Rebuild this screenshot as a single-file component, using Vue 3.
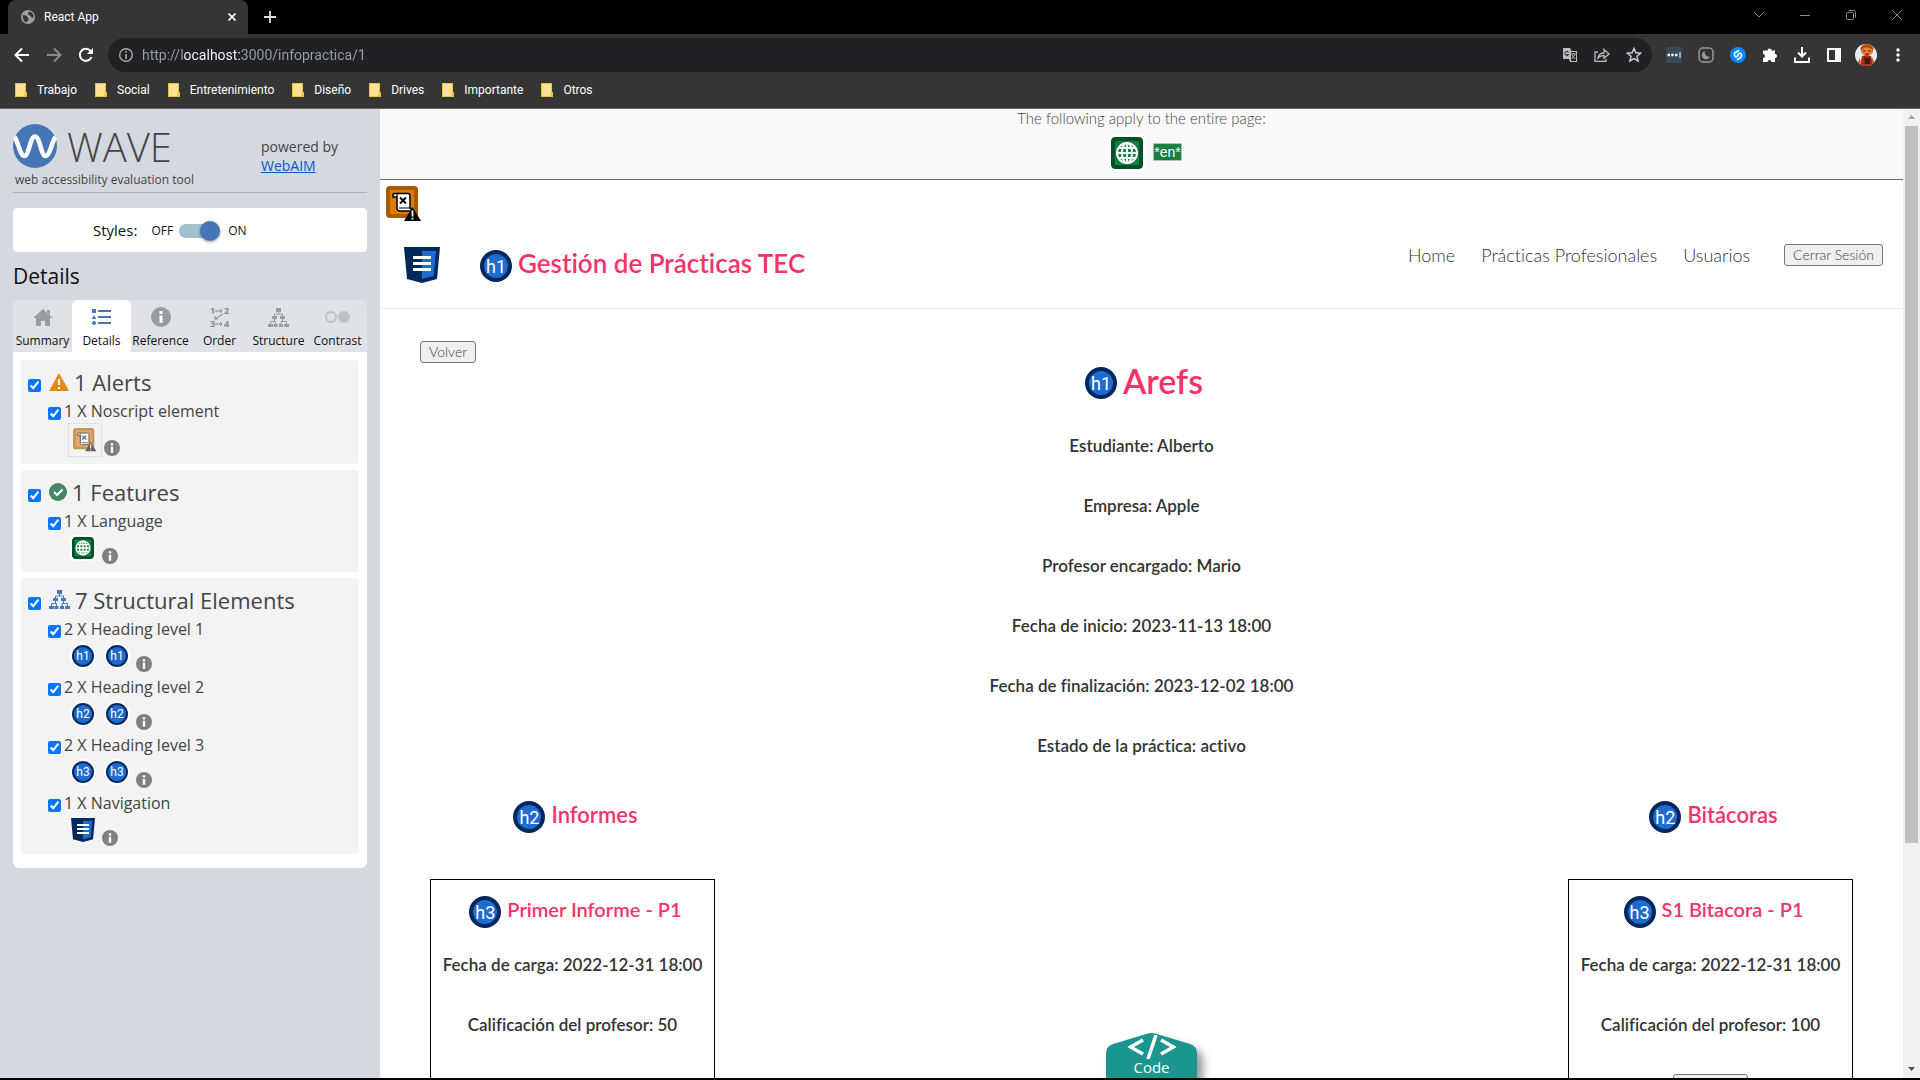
<script setup>
import { ref } from 'vue'

const url = ref('http://localhost:3000/infopractica/1')
const stylesOn = ref(true)
const bookmarks = ['Trabajo', 'Social', 'Entretenimiento', 'Diseño', 'Drives', 'Importante', 'Otros']
const tabs = ['Summary', 'Details', 'Reference', 'Order', 'Structure', 'Contrast']
const groups = [
  { icon: 'alert', title: '1 Alerts', items: [{ label: '1 X Noscript element', icons: ['noscript'] }] },
  { icon: 'feature', title: '1 Features', items: [{ label: '1 X Language', icons: ['lang'] }] },
  {
    icon: 'structure',
    title: '7 Structural Elements',
    items: [
      { label: '2 X Heading level 1', icons: ['h1', 'h1'] },
      { label: '2 X Heading level 2', icons: ['h2', 'h2'] },
      { label: '2 X Heading level 3', icons: ['h3', 'h3'] },
      { label: '1 X Navigation', icons: ['nav'] },
    ],
  },
]
const facts = [
  'Estudiante: Alberto',
  'Empresa: Apple',
  'Profesor encargado: Mario',
  'Fecha de inicio: 2023-11-13 18:00',
  'Fecha de finalización: 2023-12-02 18:00',
  'Estado de la práctica: activo',
]
const columns = [
  { title: 'Informes', card: 'Primer Informe - P1', date: 'Fecha de carga: 2022-12-31 18:00', grade: 'Calificación del profesor: 50', action: false },
  { title: 'Bitácoras', card: 'S1 Bitacora - P1', date: 'Fecha de carga: 2022-12-31 18:00', grade: 'Calificación del profesor: 100', action: true },
]
</script>

<template>
  <div class="browser">
    <svg class="defs" width="0" height="0" aria-hidden="true">
      <symbol id="i-globe" viewBox="0 0 32 32">
        <rect width="32" height="32" rx="4" fill="#00502a" />
        <rect x="4" y="4" width="24" height="24" fill="#15803f" />
        <g fill="none" stroke="#fff" stroke-width="2">
          <circle cx="16" cy="16" r="10" /><ellipse cx="16" cy="16" rx="5" ry="10" />
          <path d="M16 6v20M6 16h20M7.500 11h17M7.500 21h17" />
        </g>
      </symbol>
      <symbol id="i-noscript" viewBox="0 0 36 36">
        <rect width="32" height="32" rx="4" fill="#a85a00" />
        <rect x="4" y="4" width="24" height="24" fill="#dd7a00" />
        <path d="M9 7.500h13c1.500 0 2 1 2 2V22l3 3H14c-2 0-3-1-3-3V11H7V9c0-1 1-1.500 2-1.500z" fill="#fff" stroke="#000" stroke-width="1.500" />
        <path d="M11 11V8M13 22h11" stroke="#000" stroke-width="1.200" fill="none" />
        <path d="M14 11.500l6 6M20 11.500l-6 6" stroke="#000" stroke-width="1.800" />
        <path d="M26.500 21L35 35H18z" fill="#000" />
        <path d="M26.500 24.500v6M26.500 31.700v1.800" stroke="#fff" stroke-width="1.800" />
      </symbol>
      <symbol id="i-nav" viewBox="0 0 36 36">
        <path d="M0 0h36l-3 32-15 4-15-4z" fill="#00285c" />
        <path d="M18 4h14l-2.300 25L18 32z" fill="#1f6bd0" />
        <path d="M9 9h18v3H9zM9 15h18v3H9zM9 21h18v3H9z" fill="#fff" />
      </symbol>
      <symbol id="i-info" viewBox="0 0 20 20">
        <circle cx="10" cy="10" r="10" fill="currentColor" />
        <path d="M8.500 4h3v3h-3zM8.500 8.500h3V16h-3z" class="info-mark" />
      </symbol>
      <symbol id="i-structure" viewBox="0 0 21 19">
        <path d="M8 0h5v4H8zM4 8h5v3H4zM12 8h5v3h-5zM0 16h5v3H0zM5.500 16h4v3h-4zM11 16h4v3h-4zM16 16h5v3h-5z" fill="currentColor" />
        <path d="M10.500 3v3M6.500 8V6h8v2M6.500 11v2.500M2.500 16v-2.500h5V16M14.500 11v2.500M13 16v-2.500h5.500V16" fill="none" stroke="currentColor" />
      </symbol>
    </svg>

    <header class="chrome">
      <div class="tabstrip">
        <div class="tab">
          <svg width="14" height="14" viewBox="0 0 14 14"><circle cx="7" cy="7" r="7" fill="#9aa0a6" /><path d="M2 5c1.500.500 3.500 0 4 1.500S8 8 7.500 9.500 6 11 5.500 12.500C3 11.500 1.500 9 2 5zM8 1.500c0 1.500-1.500 1.500-1 2.800S10 5 10 6.500s1.500 1 2.500 1C13 4.500 11 2 8 1.500z" fill="#35363a" /></svg>
          <span class="tab-title">React App</span>
          <button class="plain" aria-label="Close tab"><svg width="8" height="8" viewBox="0 0 8 8"><path d="M0.500 0.500l7 7M7.500 0.500l-7 7" stroke="#fff" stroke-width="1.600" /></svg></button>
        </div>
        <button class="plain new-tab" aria-label="New tab"><svg width="12" height="12" viewBox="0 0 12 12"><path d="M6 0v12M0 6h12" stroke="#ddd" stroke-width="1.800" /></svg></button>
        <div class="window-buttons">
          <button class="plain" aria-label="Search tabs"><svg width="10" height="10" viewBox="0 0 10 10"><path d="M0 2l5 5 5-5" fill="none" stroke="#888" /></svg></button>
          <button class="plain" aria-label="Minimize"><svg width="10" height="10" viewBox="0 0 10 10"><path d="M0 5.500h10" stroke="#888" /></svg></button>
          <button class="plain" aria-label="Restore"><svg width="10" height="10" viewBox="0 0 10 10"><rect x=".5" y="2.500" width="7" height="7" rx="1" fill="none" stroke="#888" /><path d="M2.500.500h5a2 2 0 0 1 2 2v5" fill="none" stroke="#888" /></svg></button>
          <button class="plain" aria-label="Close window"><svg width="10" height="10" viewBox="0 0 10 10"><path d="M0 0l10 10M10 0L0 10" stroke="#888" /></svg></button>
        </div>
      </div>

      <div class="toolbar">
        <div class="nav-buttons">
          <button class="plain" aria-label="Back"><svg width="16" height="16" viewBox="0 0 16 16"><path d="M15 8H2M8 1.500L1.500 8 8 14.500" fill="none" stroke="#fff" stroke-width="2" /></svg></button>
          <button class="plain" aria-label="Forward"><svg width="16" height="16" viewBox="0 0 16 16"><path d="M1 8h13M8 1.500L14.500 8 8 14.500" fill="none" stroke="#8a8a8a" stroke-width="2" /></svg></button>
          <button class="plain" aria-label="Reload"><svg width="16" height="16" viewBox="0 0 16 16"><path d="M13.500 10A6 6 0 1 1 12.500 4" fill="none" stroke="#fff" stroke-width="2" /><path d="M15 1v6H9z" fill="#fff" /></svg></button>
        </div>
        <div class="omnibox">
          <svg width="14" height="14" viewBox="0 0 14 14"><circle cx="7" cy="7" r="6.300" fill="none" stroke="#aaa" stroke-width="1.400" /><path d="M7 3v1.700M7 6v5" stroke="#aaa" stroke-width="1.600" /></svg>
          <input v-model="url" class="url" type="text" aria-label="Address" />
          <button class="plain" aria-label="Translate"><svg width="15" height="15" viewBox="0 0 15 15"><path d="M0 0h7l1.500 3H14v11H7L6 11H0z" fill="#bbb" /><path d="M8 4h5v9H8z" fill="#202124" /><path d="M8 6h5M10.500 5v1M12.300 6.500L8.500 11M9 7l3 4" stroke="#bbb" fill="none" /><path d="M5.500 4.200a2 2 0 1 0 .2 2.300H4" fill="none" stroke="#202124" /></svg></button>
          <button class="plain" aria-label="Share"><svg width="16" height="16" viewBox="0 0 16 16"><path d="M4 5H1v9.300h11V12M4 11c.5-3.500 2.500-5 6-5V2.500L15 7l-5 4.300V8.500C7 8.500 5.300 9.500 4 11z" fill="none" stroke="#bbb" stroke-width="1.300" /></svg></button>
          <button class="plain" aria-label="Bookmark"><svg width="16" height="16" viewBox="0 0 16 16"><path d="M8 1.500l1.900 4.300 4.700.400-3.600 3.100 1.100 4.600L8 11.500l-4.100 2.400L5 9.300 1.400 6.200l4.700-.400z" fill="none" stroke="#ccc" stroke-width="1.500" /></svg></button>
        </div>
        <div class="extensions">
          <button class="plain" aria-label="Passwords"><svg width="16" height="16" viewBox="0 0 16 16"><rect width="16" height="16" rx="1" fill="#384a55" /><path d="M1.500 6.800h2.400v2.400H1.500zM5.300 6.800h2.400v2.400H5.300zM9.100 6.800h2.400v2.400H9.100zM13.500 5h1v6h-1z" fill="#fff" /></svg></button>
          <button class="plain" aria-label="Dark mode"><svg width="16" height="16" viewBox="0 0 16 16"><rect x="1" y="1" width="14" height="14" rx="4" fill="none" stroke="#999" stroke-width="1.500" /><path d="M7 4a4.200 4.200 0 1 0 5 5.500A4.200 4.200 0 0 1 7 4z" fill="#999" /></svg></button>
          <button class="plain" aria-label="Music finder"><svg width="16" height="16" viewBox="0 0 16 16"><circle cx="8" cy="8" r="8" fill="#08f" /><path d="M8.500 3.500L5.700 5.200C3.500 6.700 4.300 9 6 10L8.300 8.600M7.500 12.500l2.800-1.700C12.500 9.300 11.700 7 10 6L7.700 7.400" fill="none" stroke="#fff" stroke-width="1.600" stroke-linecap="round" /></svg></button>
          <button class="plain" aria-label="Extensions"><svg width="16" height="16" viewBox="0 0 16 16"><path d="M1 3.500h4.500a2 2 0 0 1 4 0H13V7a2 2 0 0 1 0 4v4H9.500a2 2 0 0 0-4 0H1v-4a2 2 0 0 0 0-4z" fill="#fff" /></svg></button>
          <button class="plain" aria-label="Downloads"><svg width="16" height="16" viewBox="0 0 16 16"><path d="M8 0v9M4 5.500l4 4 4-4M1 10.500V15h14v-4.500" fill="none" stroke="#fff" stroke-width="2" /></svg></button>
          <button class="plain" aria-label="Side panel"><svg width="14" height="14" viewBox="0 0 14 14"><rect x="1" y="1" width="12" height="12" fill="none" stroke="#fff" stroke-width="2" /><path d="M8 1h5v12H8z" fill="#fff" /></svg></button>
          <button class="plain" aria-label="Profile"><svg width="22" height="22" viewBox="0 0 22 22"><defs><clipPath id="pf"><circle cx="11" cy="11" r="11" /></clipPath></defs><g clip-path="url(#pf)"><path fill="#e8ecf2" d="M0 0h22v22H0z" /><ellipse cx="12" cy="5" rx="6.500" ry="5" fill="#b5480c" /><ellipse cx="12" cy="7.500" rx="6" ry="4" fill="#e88235" /><path d="M8 7h2.500M13 7h3M10 10h4" stroke="#5b1c08" stroke-width="1.200" /><path d="M7 12l5-1 4 1 3 10H5z" fill="#b52a14" /><path d="M9 12l3 3 3-3v8h-5z" fill="#4a1410" /><path d="M5 14l-3 6 4 1zM17 13l3 6-3 1z" fill="#d8602a" /></g></svg></button>
          <button class="plain" aria-label="Menu"><svg width="4" height="14" viewBox="0 0 4 14"><circle cx="2" cy="2" r="1.700" fill="#fff" /><circle cx="2" cy="7" r="1.700" fill="#fff" /><circle cx="2" cy="12" r="1.700" fill="#fff" /></svg></button>
        </div>
      </div>

      <nav class="bookmarks">
        <a v-for="b in bookmarks" :key="b" href="#">
          <svg width="12" height="14" viewBox="0 0 12 14"><path d="M0 0h11v9h1v5H0z" fill="#e9c243" /><path d="M1 1h9v8l-1 4H1z" fill="#ffe391" /></svg>{{ b }}
        </a>
      </nav>
    </header>

    <div class="body">
      <aside class="sidebar">
        <div class="brand">
          <div class="brand-main">
            <div class="brand-row">
              <svg width="44" height="44" viewBox="0 0 44 44"><circle cx="22" cy="22" r="22" fill="#4676b8" /><path d="M1.500 13C5 17 7 32 11.500 32S17 12.500 22 12.500 28 32 32.500 32 39 17 42.500 13" fill="none" stroke="#fff" stroke-width="4.600" /></svg>
              <span class="brand-name">WAVE</span>
            </div>
            <p>web accessibility evaluation tool</p>
          </div>
          <div class="powered">powered by<br /><a href="#">WebAIM</a></div>
        </div>

        <div class="styles-box">
          <span class="styles-label">Styles:</span>
          <label class="switch">OFF <input v-model="stylesOn" type="checkbox" role="switch" /> ON</label>
        </div>

        <h2>Details</h2>

        <div class="tabs">
          <button v-for="t in tabs" :key="t" :class="{ active: t === 'Details' }">
            <span class="tab-icon">
              <svg v-if="t === 'Summary'" width="20" height="17" viewBox="0 0 20 17"><path d="M10 0l10 9h-3v8h-5v-5H8v5H3V9H0zM14 1h3v5l-3-3z" fill="#9a9da0" /></svg>
              <svg v-else-if="t === 'Details'" width="19" height="16" viewBox="0 0 19 16"><path d="M0 0h4v4H0zM2 6l2.300 4H-.3zM6 1h13v2H6zM6 7h13v2H6zM6 13h13v2H6z" fill="#4676b8" /><circle cx="2" cy="14" r="2" fill="#4676b8" /></svg>
              <svg v-else-if="t === 'Reference'" class="info-tab" width="20" height="20"><use href="#i-info" /></svg>
              <svg v-else-if="t === 'Order'" width="28" height="30" viewBox="-4 -5 28 30"><g fill="#888b8e" class="order-digits"><text x="0" y="7">1</text><text x="14" y="7">2</text><text x="0" y="20">3</text><text x="14" y="20">4</text></g><path d="M5 4h7M10 2l2 2-2 2M5 17h7M10 15l2 2-2 2M13 7l-8 5M5 9v3h3" fill="none" stroke="#888b8e" /></svg>
              <svg v-else-if="t === 'Structure'" class="gray" width="21" height="19"><use href="#i-structure" /></svg>
              <svg v-else width="25" height="12" viewBox="0 0 25 12"><circle cx="6" cy="6" r="5" fill="none" stroke="#bfc1c4" stroke-width="2" /><circle cx="19" cy="6" r="6" fill="#bfc1c4" /></svg>
            </span>
            {{ t }}
          </button>
        </div>

        <div class="panel">
          <section v-for="g in groups" :key="g.title" class="group">
            <label class="group-title">
              <input type="checkbox" checked />
              <svg v-if="g.icon === 'alert'" width="20" height="18" viewBox="0 0 20 18"><path d="M10 0l10 18H0z" fill="#e68a17" /><path d="M10 6v6M10 14v2" stroke="#fff" stroke-width="2" /></svg>
              <svg v-else-if="g.icon === 'feature'" width="18" height="18" viewBox="0 0 18 18"><circle cx="9" cy="9" r="9" fill="#478564" /><path d="M5 9l3 3 5.500-5.500" fill="none" stroke="#fff" stroke-width="2" /></svg>
              <svg v-else class="blue" width="21" height="19"><use href="#i-structure" /></svg>
              <span>{{ g.title }}</span>
            </label>
            <div v-for="it in g.items" :key="it.label" class="item">
              <label><input type="checkbox" checked />{{ it.label }}</label>
              <div class="item-icons">
                <template v-for="(ic, i) in it.icons" :key="i">
                  <span v-if="ic === 'noscript'" class="dotted"><svg width="24" height="24"><use href="#i-noscript" /></svg></span>
                  <span v-else class="slot">
                    <svg v-if="ic === 'lang'" class="halo" width="22" height="22"><use href="#i-globe" /></svg>
                    <svg v-else-if="ic === 'nav'" width="24" height="24"><use href="#i-nav" /></svg>
                    <span v-else class="badge small">{{ ic }}</span>
                  </span>
                </template>
                <button class="plain info" aria-label="Information"><svg width="16" height="16"><use href="#i-info" /></svg></button>
              </div>
            </div>
          </section>
        </div>
      </aside>

      <main class="page">
        <div class="page-wide">
          <p>The following apply to the entire page:</p>
          <div class="page-wide-icons">
            <svg class="halo big" width="32" height="32"><use href="#i-globe" /></svg>
            <span class="lang">*en*</span>
          </div>
        </div>
        <svg class="noscript" width="36" height="36"><use href="#i-noscript" /></svg>

        <nav class="site-nav">
          <svg width="36" height="36"><use href="#i-nav" /></svg>
          <h1 class="site-title"><span class="badge">h1</span>Gestión de Prácticas TEC</h1>
          <div class="links">
            <a href="#">Home</a>
            <a href="#">Prácticas Profesionales</a>
            <a href="#">Usuarios</a>
            <button class="btn">Cerrar Sesión</button>
          </div>
        </nav>

        <div class="content">
          <button class="btn back">Volver</button>
          <h1 class="name"><span class="badge">h1</span>Arefs</h1>
          <p v-for="f in facts" :key="f" class="fact">{{ f }}</p>
          <div class="columns">
            <section v-for="c in columns" :key="c.title" class="column">
              <h2><span class="badge">h2</span>{{ c.title }}</h2>
              <article class="card">
                <h3><span class="badge">h3</span>{{ c.card }}</h3>
                <p class="fact">{{ c.date }}</p>
                <p class="fact">{{ c.grade }}</p>
                <button v-if="c.action" class="btn card-btn" aria-label="Ver"></button>
              </article>
            </section>
          </div>
        </div>

        <button class="code">
          <svg class="code-shape" width="108" height="60" viewBox="0 0 108 60"><path d="M6 60V22q0-8 7-10L47 1.700q4.500-1.400 9 0L90 12q7 2 7 10v38z" fill="#1a968f" /></svg>
          <svg class="code-mark" width="48" height="24" viewBox="0 0 48 24"><path d="M15 5L2.500 12 15 19M33 5l12.500 7L33 19M28 0l-8 24" fill="none" stroke="#fff" stroke-width="3.500" /></svg>
          <span>Code</span>
        </button>
      </main>

      <div class="scrollbar">
        <svg width="7" height="4" viewBox="0 0 7 4"><path d="M0 4l3.500-4L7 4z" fill="#a3a3a3" /></svg>
        <div class="thumb"></div>
        <svg class="down" width="7" height="4" viewBox="0 0 7 4"><path d="M0 0l3.500 4L7 0z" fill="#505050" /></svg>
      </div>
    </div>
  </div>
</template>

<style>
body { margin: 0; background: #000; }
</style>

<style scoped>
* { box-sizing: border-box; }
h1, h2, h3, p { margin: 0; }
svg { display: block; flex: none; }
.defs { position: absolute; }
.info-mark { fill: #fff; }
.plain { display: flex; align-items: center; justify-content: center; border: 0; padding: 0; background: none; }
.browser { height: 100vh; display: flex; flex-direction: column; border-bottom: 2px solid #000; overflow: hidden; font-family: "Open Sans", sans-serif; }

.chrome { flex: none; background: #353535; border-bottom: 1px solid #666; color: #fff; font-size: 12px; }
.tabstrip { display: flex; height: 34px; background: #000; padding-left: 8px; }
.tab { display: flex; align-items: center; width: 240px; padding: 0 12px 0 13px; gap: 9px; background: #353535; border-radius: 8px 8px 0 0; }
.tab-title { flex: 1; font-family: Roboto, sans-serif; }
.new-tab { width: 44px; }
.window-buttons { display: flex; margin-left: auto; }
.window-buttons button { width: 46px; height: 29px; }
.toolbar { display: flex; align-items: center; height: 42px; padding: 0 6px; }
.nav-buttons { display: flex; width: 102px; }
.nav-buttons button { width: 32px; }
.omnibox { flex: 1; display: flex; align-items: center; height: 34px; padding: 0 2px 0 11px; border-radius: 17px; background: #202124; }
.omnibox button { width: 32px; height: 32px; }
.url { flex: 1; height: 24px; margin-left: 9px; padding: 0; border: 0; outline: 0; font: 14px Roboto, sans-serif; color: transparent; background: linear-gradient(90deg, #9aa0a6 42px, #fff 42px 98px, #9aa0a6 98px); -webkit-background-clip: text; background-clip: text; }
.extensions { display: flex; padding-left: 6px; }
.extensions button { width: 32px; height: 32px; }
.bookmarks { display: flex; gap: 18px; align-items: center; height: 32px; padding: 0 15px 4px; }
.bookmarks a { display: flex; align-items: center; gap: 10px; color: #fff; text-decoration: none; font-family: Roboto, sans-serif; }

.body { flex: 1; min-height: 0; display: flex; }
.sidebar { flex: none; width: 380px; padding: 15px 13px; background: #d4d8e0; color: #444; overflow: hidden; }
.brand { display: flex; justify-content: space-between; height: 69px; border-bottom: 1px solid #aeb2b5; }
.brand-row { display: flex; align-items: center; gap: 10px; height: 44px; }
.brand-name { padding-top: 2px; font-size: 40px; font-weight: 300; line-height: 44px; }
.brand p { padding-left: 2px; font-size: 12px; line-height: 24px; }
.powered { width: 106px; padding-top: 13px; font-size: 14px; line-height: 19px; }
.powered a { color: #1155cc; }
.styles-box { display: flex; align-items: center; height: 44px; margin-top: 15px; padding-left: 80px; gap: 14px; background: #fff; border-radius: 4px; color: #111; }
.styles-label { font-size: 15px; }
.switch { display: flex; align-items: center; gap: 6px; font-size: 12px; }
.switch input { appearance: none; position: relative; width: 41px; height: 14px; margin: 2px 2px 0 0; border-radius: 7px; background: #a0c2cc; }
.switch input::after { content: ""; position: absolute; right: 0; top: -3px; width: 20px; height: 20px; border-radius: 50%; background: #4676b8; box-shadow: 0 1px 3px #0006; }
.sidebar h2 { height: 48px; font-size: 21px; font-weight: 400; line-height: 48px; color: #111; }
.tabs { display: flex; height: 52px; background: #dfe2e6; border-radius: 6px 6px 0 0; }
.tabs button { flex: 1 1 0; min-width: 0; display: flex; flex-direction: column; align-items: center; padding: 0; border: 0; border-radius: 6px 6px 0 0; background: none; font: 12px "Open Sans", sans-serif; line-height: 18px; color: #111; white-space: nowrap; }
.tabs .active { background: #fff; }
.tab-icon { display: flex; align-items: center; height: 32px; padding-top: 2px; }
.info-tab { color: #9a9da0; }
.gray { color: #9a9da0; }
.blue { color: #4676b8; }
.order-digits { font: 700 9px "Open Sans", sans-serif; }
.panel { display: flex; flex-direction: column; gap: 6px; padding: 8px 8px 14px; background: #fff; border-radius: 0 0 6px 6px; }
.group { padding: 4px 7px 5px; background: #f3f3f3; border-radius: 4px; }
.group input, .item input { flex: none; width: 13px; height: 13px; margin: 5px 0 0; }
.group-title { display: flex; align-items: center; gap: 8px; height: 35px; font-size: 22px; }
.group-title input { margin-top: 7px; }
.group-title span { margin-left: -3px; }
.item { padding-left: 20px; }
.item label { display: flex; align-items: center; gap: 3px; height: 24px; font-size: 16px; }
.item-icons { display: flex; align-items: flex-start; height: 34px; padding-left: 18px; }
.item-icons:has(.dotted) { height: 36px; padding-left: 20px; }
.slot { display: flex; width: 34px; height: 30px; align-items: center; justify-content: center; }
.dotted { display: flex; width: 34px; height: 34px; align-items: center; justify-content: center; border: 1px dotted #bbb; opacity: 0.6; }
.halo { border-radius: 4px; box-shadow: 0 0 0 2px #fff; }
.info { margin: 15px 0 0 2px; color: #808080; }
.dotted + .info { margin-top: 17px; }

.badge { display: inline-flex; flex: none; align-items: center; justify-content: center; width: 32px; height: 32px; margin-top: 6px; border: 4px solid #00285c; border-radius: 50%; background: #1f6bd0; color: #fff; font: 18px Roboto, sans-serif; }
.badge.small { width: 22px; height: 22px; margin: 0; border-width: 2px; font-size: 12px; box-shadow: 0 0 0 2px #fff; }

.page { position: relative; flex: 1; min-width: 0; background: #fff; overflow: hidden; font-family: Lato, sans-serif; font-variant-ligatures: none; color: #444; }
.page-wide { height: 71px; background: #f9f9f9; border-bottom: 1px solid #6b716b; text-align: center; }
.page-wide p { font-size: 15px; line-height: 18px; font-weight: 300; }
.page-wide-icons { display: flex; justify-content: center; align-items: center; gap: 10px; height: 50px; padding: 0 0 8px 10px; margin-top: 5px; }
.halo.big { box-shadow: 0 0 0 3px #fff; }
.lang { margin-bottom: 2px; border: 1px solid #bbb; background: #15803f; color: #fff; font: 14px/16px "Liberation Sans", sans-serif; }
.noscript { margin: 6px 0 0 6px; }
.site-nav { display: flex; align-items: center; height: 87px; padding: 0 20px 0 24px; border-bottom: 1px solid #eee; }
.site-title, .name, .column h2, .card h3 { display: flex; align-items: center; justify-content: center; gap: 6px; color: #f4336a; font-weight: 600; white-space: nowrap; }
.site-title { margin: 0 0 4px 40px; font-size: 26px; }
.links { display: flex; align-items: center; gap: 26px; margin: 0 0 20px auto; font-size: 18px; line-height: 20px; font-weight: 300; }
.links a { color: #333; text-decoration: none; }
.links .btn { margin-left: 8px; }
.btn { height: 22px; padding: 0 8px; border: 1px solid #767676; border-radius: 3px; background: #efefef; color: #444; font: 300 14px/18px Lato, sans-serif; }
.content { display: flex; flex-direction: column; padding: 32px 50px 0; }
.back { align-self: flex-start; margin-left: -10px; }
.name { height: 40px; margin-top: -3px; padding-left: 5px; font-size: 34px; }
.fact { font-size: 17px; font-weight: 600; line-height: 20px; margin-top: 40px; color: #333; text-align: center; }
.name + .fact { margin-top: 36px; }
.columns { display: flex; justify-content: space-between; }
.column { width: 285px; }
.column h2, .card h3 { padding-left: 6px; }
.column h2 { height: 32px; margin-top: 42px; font-size: 22px; }
.card { display: flex; flex-direction: column; height: 260px; margin-top: 49px; border: 1px solid #000; padding-top: 13px; }
.card h3 { height: 32px; font-size: 20px; }
.card h3 + .fact { margin-top: 30px; }
.card-btn { align-self: center; width: 75px; margin-top: 39px; }
.code { position: absolute; left: 720px; bottom: 0; width: 108px; height: 46px; display: flex; flex-direction: column; align-items: center; border: 0; padding: 0 5px 0 0; background: none; color: #fff; font: 15px/16px "Open Sans", sans-serif; }
.code-shape { position: absolute; left: 0; top: 0; filter: drop-shadow(6px 6px 4px #0006); }
.code-mark { position: relative; margin-top: 3px; }
.code span { position: relative; }

.scrollbar { flex: none; display: flex; flex-direction: column; align-items: center; width: 17px; padding: 6px 0 7px; background: #f1f1f1; }
.thumb { flex: 0 0 75%; width: 13px; margin-top: 7px; background: #c1c1c1; }
.down { margin-top: auto; }
</style>
